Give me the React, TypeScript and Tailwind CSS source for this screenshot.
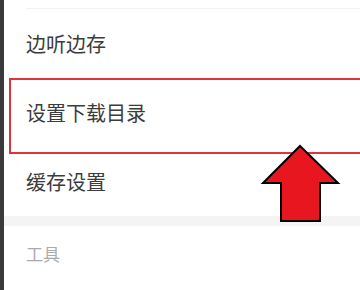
import React from 'react'

const rows = ['边听边存', '设置下载目录', '缓存设置']

export default function App() {
  return (
    <div
      className="relative flex h-[290px] w-[360px] overflow-hidden bg-white"
      style={{ fontFamily: '"Noto Sans CJK SC", "Noto Sans", sans-serif' }}
    >
      {/* dark edge of the screen behind */}
      <div className="w-[4px] shrink-0 bg-[#3b3a3a]" />

      <div className="flex flex-1 flex-col bg-white">
        <div className="h-[8px]" />
        <div className="ml-[22px] h-px bg-[#f2f2f2]" />
        {rows.map((label) => (
          <div key={label} className="flex h-[69px] items-center pl-[22px]">
            <span className="text-[20px] leading-none text-[#3c3c3c]">{label}</span>
          </div>
        ))}
        <div className="h-[10px] bg-[#f4f4f4]" />
        <div className="flex h-[54px] items-center pl-[22px]">
          <span className="text-[17px] leading-none text-[#aaaaaa]">工具</span>
        </div>
      </div>

      {/* red highlight box */}
      <div className="absolute left-[9px] top-[78px] h-[76px] w-[360px] border-2 border-[#e0333b]" />

      {/* red arrow */}
      <svg className="absolute left-0 top-0" width="360" height="290" viewBox="0 0 360 290">
        <path
          d="M300 146 L338 183 L320 183 L320 221 L281 221 L281 183 L263 183 Z"
          fill="#e8161f"
          stroke="#000"
          strokeWidth="2"
          strokeLinejoin="miter"
        />
      </svg>
    </div>
  )
}
